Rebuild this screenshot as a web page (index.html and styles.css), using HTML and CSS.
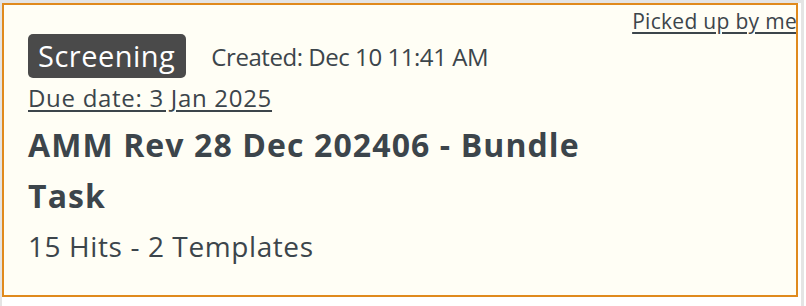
FILE: index.html
```html
<!DOCTYPE html>
<html>
<head>
<meta charset="utf-8">
<link rel="stylesheet" href="styles.css">
</head>
<body>
<div class="page">
  <div class="card">
    <div class="picked-row"><a class="picked" href="#">Picked up by me</a></div>
    <div class="meta-row">
      <span class="badge">Screening</span>
      <span class="created">Created: Dec 10 11:41 AM</span>
    </div>
    <div class="due-row"><a class="due" href="#">Due date: 3 Jan 2025</a></div>
    <div class="title">AMM Rev 28 Dec 202406 - Bundle Task</div>
    <div class="hits">15 Hits - 2 Templates</div>
  </div>
</div>
</body>
</html>
```

FILE: styles.css
```css
html, body {
  margin: 0;
  padding: 0;
  background: #ffffff;
}
body {
  font-family: "Open Sans", "Lato", sans-serif;
  color: #3c454b;
}
.page {
  box-sizing: border-box;
  width: 804px;
  height: 306px;
  border-top: 3px solid #e4e4e4;
  border-left: 2px solid #e4e4e4;
  border-right: 3px solid #e4e4e4;
  padding-right: 3px;
}
.card {
  box-sizing: border-box;
  height: 294px;
  border: 2px solid #e08a1d;
  background: #fffef5;
  padding: 4px 0 0 24px;
  overflow: hidden;
}
.picked-row {
  text-align: right;
  height: 24px;
  line-height: 24px;
  margin-right: -1px;
}
.picked {
  font-size: 21px;
  letter-spacing: 0.3px;
  color: #3c454b;
  text-decoration: underline;
  text-underline-offset: 3px;
}
.meta-row {
  display: flex;
  align-items: center;
  margin-top: 1px;
}
.badge {
  display: inline-block;
  background: #4a4a4a;
  color: #ffffff;
  font-size: 29px;
  letter-spacing: 0.5px;
  line-height: 44px;
  height: 44px;
  padding: 0 11px 0 10px;
  border-radius: 5px;
}
.created {
  font-size: 24px;
  letter-spacing: -0.45px;
  margin-left: 25px;
}
.due-row {
  margin-top: 6px;
  line-height: 28px;
}
.due {
  font-size: 24px;
  letter-spacing: 0.7px;
  color: #3c454b;
  text-decoration: underline;
  text-underline-offset: 3px;
}
.title {
  font-size: 32px;
  font-weight: 700;
  letter-spacing: 1.1px;
  line-height: 51px;
  max-width: 600px;
  margin-top: 4px;
}
.hits {
  font-size: 28px;
  letter-spacing: 0.6px;
  line-height: 50px;
}
```
